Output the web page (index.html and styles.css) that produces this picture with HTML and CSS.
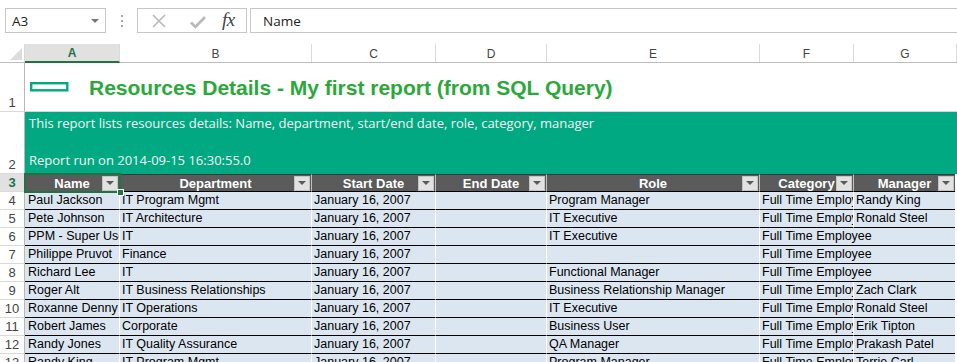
FILE: index.html
```html
<!DOCTYPE html>
<html>
<head>
<meta charset="utf-8">
<link rel="stylesheet" href="styles.css">
</head>
<body>
<div class="app">
  <div class="fbar">
    <div class="namebox"><span class="nb-text">A3</span><span class="caret"></span></div>
    <div class="dots"><i></i><i></i><i></i></div>
    <div class="fxbox">
      <svg class="ico-x" width="16" height="16" viewBox="0 0 16 16"><path d="M2 2 L14 14 M14 2 L2 14" stroke="#b9b9b9" stroke-width="1.6" fill="none"/></svg>
      <svg class="ico-ok" width="18" height="16" viewBox="0 0 18 16"><path d="M2 8.5 L6.5 13 L16 3" stroke="#b9b9b9" stroke-width="2.6" fill="none"/></svg>
      <span class="fx">fx</span>
    </div>
    <div class="finput">Name</div>
  </div>

  <div class="sheet">
    <div class="row colhdr">
      <div class="corner"><span class="tri"></span></div>
      <div class="ch sel">A</div>
      <div class="ch">B</div>
      <div class="ch">C</div>
      <div class="ch">D</div>
      <div class="ch">E</div>
      <div class="ch">F</div>
      <div class="ch">G</div>
    </div>

    <div class="row r1">
      <div class="rh">1</div>
      <div class="titlecell">
        <svg class="logo" width="39" height="10" viewBox="0 0 39 10"><rect x="1.2" y="1.2" width="36.1" height="7.1" fill="none" stroke="#01a982" stroke-width="2.4"/></svg>
        <span class="title">Resources Details - My first report (from SQL Query)</span>
      </div>
    </div>

    <div class="row r2">
      <div class="rh">2</div>
      <div class="band">This report lists resources details: Name, department, start/end date, role, category, manager<br><br>Report run on 2014-09-15 16:30:55.0</div>
    </div>

    <div class="row r3">
      <div class="rh selrh">3</div>
      <div class="th"><span class="lbl">Name</span><span class="fbtn"></span></div>
      <div class="th"><span class="lbl">Department</span><span class="fbtn"></span></div>
      <div class="th"><span class="lbl">Start Date</span><span class="fbtn"></span></div>
      <div class="th"><span class="lbl">End Date</span><span class="fbtn"></span></div>
      <div class="th"><span class="lbl">Role</span><span class="fbtn"></span></div>
      <div class="th"><span class="lbl">Category</span><span class="fbtn"></span></div>
      <div class="th last"><span class="lbl">Manager</span><span class="fbtn"></span></div>
    </div>

    <div class="row dr">
      <div class="rh">4</div><div class="td">Paul Jackson</div><div class="td">IT Program Mgmt</div><div class="td">January 16, 2007</div><div class="td"></div><div class="td">Program Manager</div><div class="td">Full Time Employee</div><div class="td last">Randy King</div>
    </div>
    <div class="row dr">
      <div class="rh">5</div><div class="td">Pete Johnson</div><div class="td">IT Architecture</div><div class="td">January 16, 2007</div><div class="td"></div><div class="td">IT Executive</div><div class="td">Full Time Employee</div><div class="td last">Ronald Steel</div>
    </div>
    <div class="row dr">
      <div class="rh">6</div><div class="td">PPM - Super User</div><div class="td">IT</div><div class="td">January 16, 2007</div><div class="td"></div><div class="td">IT Executive</div><div class="td spill">Full Time Employee</div><div class="td last"></div>
    </div>
    <div class="row dr">
      <div class="rh">7</div><div class="td">Philippe Pruvot</div><div class="td">Finance</div><div class="td">January 16, 2007</div><div class="td"></div><div class="td"></div><div class="td spill">Full Time Employee</div><div class="td last"></div>
    </div>
    <div class="row dr">
      <div class="rh">8</div><div class="td">Richard Lee</div><div class="td">IT</div><div class="td">January 16, 2007</div><div class="td"></div><div class="td">Functional Manager</div><div class="td spill">Full Time Employee</div><div class="td last"></div>
    </div>
    <div class="row dr">
      <div class="rh">9</div><div class="td">Roger Alt</div><div class="td">IT Business Relationships</div><div class="td">January 16, 2007</div><div class="td"></div><div class="td">Business Relationship Manager</div><div class="td">Full Time Employee</div><div class="td last">Zach Clark</div>
    </div>
    <div class="row dr">
      <div class="rh">10</div><div class="td">Roxanne Denny</div><div class="td">IT Operations</div><div class="td">January 16, 2007</div><div class="td"></div><div class="td">IT Executive</div><div class="td">Full Time Employee</div><div class="td last">Ronald Steel</div>
    </div>
    <div class="row dr">
      <div class="rh">11</div><div class="td">Robert James</div><div class="td">Corporate</div><div class="td">January 16, 2007</div><div class="td"></div><div class="td">Business User</div><div class="td">Full Time Employee</div><div class="td last">Erik Tipton</div>
    </div>
    <div class="row dr">
      <div class="rh">12</div><div class="td">Randy Jones</div><div class="td">IT Quality Assurance</div><div class="td">January 16, 2007</div><div class="td"></div><div class="td">QA Manager</div><div class="td">Full Time Employee</div><div class="td last">Prakash Patel</div>
    </div>
    <div class="row dr">
      <div class="rh">13</div><div class="td">Randy King</div><div class="td">IT Program Mgmt</div><div class="td">January 16, 2007</div><div class="td"></div><div class="td">Program Manager</div><div class="td">Full Time Employee</div><div class="td last">Terrie Carl</div>
    </div>

    <div class="selbox"><span class="handle"></span></div>
  </div>
</div>
</body>
</html>
```

FILE: styles.css
```css
* { box-sizing: border-box; }
html, body { margin: 0; padding: 0; background: #fff; }
body { width: 957px; height: 362px; overflow: hidden; font-family: "Liberation Sans", Arial, sans-serif; }

.app { width: 957px; }

/* formula bar */
.fbar { height: 44px; display: flex; align-items: flex-start; padding-top: 8px; padding-left: 5px; }
.namebox { width: 101px; height: 25px; border: 1px solid #c6c6c6; display: flex; align-items: center; padding-left: 6px; padding-right: 6px; font-family: "Open Sans", "Liberation Sans", sans-serif; font-size: 13.5px; color: #222; }
.nb-text { flex: 1; }
.caret { width: 0; height: 0; border-left: 4px solid transparent; border-right: 4px solid transparent; border-top: 4px solid #777; }
.dots { width: 31px; height: 25px; display: flex; flex-direction: column; align-items: center; justify-content: center; gap: 3px; }
.dots i { display: block; width: 2px; height: 2px; background: #a6a6a6; }
.fxbox { width: 110px; height: 25px; border: 1px solid #c6c6c6; display: flex; align-items: center; padding-left: 13px; }
.ico-x { margin-right: 22px; }
.ico-ok { margin-right: 15px; margin-top: 2px; }
.fx { font-family: "Liberation Serif", "Times New Roman", serif; font-style: italic; font-size: 19px; color: #444; letter-spacing: -0.5px; margin-top: -2px; }
.finput { flex: 1; margin-left: 3px; height: 25px; border: 1px solid #c6c6c6; border-right: none; display: flex; align-items: center; padding-left: 12px; font-family: "Open Sans", "Liberation Sans", sans-serif; font-size: 13.5px; color: #222; }

/* sheet */
.sheet { position: relative; }
.row { display: grid; grid-template-columns: 25px 95px 192px 124px 111px 213px 94px 103px; }

.colhdr { height: 19px; border-bottom: 1px solid #bdbdbd; }
.corner { border-right: 1px solid #d8d8d8; position: relative; display: flex; align-items: flex-end; justify-content: flex-end; padding: 0 2px 2px 0; }
.tri { width: 0; height: 0; border-left: 12px solid transparent; border-bottom: 12px solid #dcdcdc; }
.ch { font-size: 12px; color: #444; display: flex; align-items: center; justify-content: center; border-right: 1px solid #dadada; padding-top: 1px; }
.ch.sel { background: #e1e1e1; color: #217346; font-weight: bold; border-bottom: 2px solid #217346; margin-bottom: -1px; }

.rh { border-right: 1px solid #b8b8b8; border-bottom: 1px solid #dadada; font-size: 13px; color: #444; display: flex; align-items: flex-end; justify-content: center; padding-bottom: 1px; background: #fff; }
.rh.selrh { background: #e1e1e1; color: #217346; font-weight: bold; }

.r1 { height: 49px; }
.titlecell { grid-column: 2 / 9; display: flex; align-items: center; padding-left: 5px; padding-top: 2px; border-bottom: 1px solid #d4d4d4; }
.logo { display: block; margin-right: 20px; margin-top: -3px; }
.title { font-size: 21px; font-weight: bold; color: #2aa93a; white-space: nowrap; }

.r2 { height: 62px; }
.band { grid-column: 2 / 9; background: #01a982; color: #f4f4f4; font-family: "Open Sans", "Liberation Sans", sans-serif; font-size: 13px; line-height: 18.5px; padding: 2px 0 0 4px; white-space: nowrap; }

.r3 { height: 18px; }
.th { display: grid; background: #5b5b5b; border-top: 1px solid #3a3a3a; border-bottom: 1px solid #000; border-right: 1px solid #c0c0c0; color: #fff; font-size: 13px; font-weight: bold; }
.th.last { border-right: none; margin-right: 2px; }
.th .lbl { grid-area: 1 / 1; display: flex; align-items: center; justify-content: center; white-space: nowrap; overflow: hidden; }
.th .fbtn { grid-area: 1 / 1; justify-self: end; align-self: center; width: 16px; height: 15px; margin-right: 1px; background: #e2e2e2; border: 1px solid #c4c4c4; display: flex; align-items: center; justify-content: center; }
.th .fbtn::after { content: ""; width: 0; height: 0; border-left: 4px solid transparent; border-right: 4px solid transparent; border-top: 4px solid #5a5a5a; }

.dr { height: 18px; background: linear-gradient(to right, #fff 25px, #dce6f1 25px, #dce6f1 955px, #fff 955px); }
.dr .rh { background: #fff; font-size: 13px; }
.td { border-bottom: 1px solid #000; border-right: 1px solid #fff; font-size: 12.5px; color: #000; padding-left: 2px; line-height: 17px; white-space: nowrap; overflow: hidden; }
.td:nth-child(2) { padding-left: 3px; }
.td.spill { overflow: visible; border-right: none; }
.td.last { border-right: none; margin-right: 2px; }

.selbox { position: absolute; left: 24px; top: 129px; width: 97px; height: 20px; border: 2px solid #217346; pointer-events: none; }
.handle { position: absolute; right: -5px; bottom: -5px; width: 7px; height: 7px; background: #217346; border: 1px solid #fff; }
```
